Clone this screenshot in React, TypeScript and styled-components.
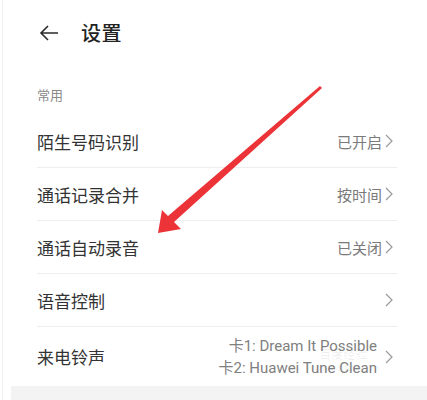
import * as React from 'react'
import styled, { createGlobalStyle } from 'styled-components'

const GlobalStyle = createGlobalStyle`
  html, body {
    margin: 0;
    padding: 0;
    background: #fff;
  }
  body {
    font-family: "Noto Sans CJK SC", "Noto Sans", Roboto, sans-serif;
  }
`

const Screen = styled.div`
  position: relative;
  width: 427px;
  height: 400px;
  overflow: hidden;
  background: #fff;
  border-left: 1px solid #f0f0f0;
  margin-left: 2px;
  box-sizing: border-box;
  display: flex;
  flex-direction: column;
`

const Header = styled.header`
  height: 65px;
  display: flex;
  align-items: center;
  padding-left: 36px;
  gap: 22px;
`

const BackButton = styled.button`
  border: 0;
  background: none;
  padding: 0;
  width: 20px;
  height: 18px;
  display: flex;
  align-items: center;
  color: #2a2a2a;
`

const Title = styled.h1`
  margin: 0;
  font-size: 20px;
  font-weight: 500;
  color: #222;
  letter-spacing: 0.5px;
`

const SectionLabel = styled.div`
  padding: 22px 0 12px 34px;
  font-size: 13px;
  line-height: 16px;
  color: #8a8a8a;
`

const List = styled.ul`
  list-style: none;
  margin: 0 32px 0 34px;
  padding: 0;
`

const Row = styled.li<{ $tall?: boolean }>`
  display: flex;
  align-items: center;
  justify-content: space-between;
  height: ${p => (p.$tall ? 59 : 52)}px;
  border-bottom: ${p => (p.$tall ? 'none' : '1px solid #eeeeee')};
  padding-right: 4px;
`

const Label = styled.span`
  font-size: 17px;
  color: #333;
`

const Value = styled.span`
  display: flex;
  align-items: center;
  font-size: 15px;
  color: #7a7a7a;
`

const ValueLines = styled.span`
  display: flex;
  flex-direction: column;
  align-items: flex-end;
  margin-right: 5px;
  line-height: 22px;
  font-family: Roboto, "Noto Sans CJK SC", sans-serif;
  color: #808080;
`

const Chevron = styled.svg`
  margin-left: 3px;
  flex-shrink: 0;
`

const BottomBand = styled.div`
  margin: auto 0 0 8px;
  height: 14px;
  background: #f3f3f3;
`

const Watermark = styled.div`
  position: absolute;
  left: 304px;
  top: 346px;
  display: flex;
  flex-direction: column;
  align-items: center;
  color: rgba(0, 0, 0, 0.08);
  font-size: 12px;
  line-height: 15px;
  pointer-events: none;
`

const WatermarkSmall = styled.span`
  font-size: 9px;
  font-family: "Liberation Sans", sans-serif;
`

const ArrowLayer = styled.svg`
  position: absolute;
  left: -2px;
  top: 0;
  pointer-events: none;
`

const ChevronIcon = () => (
  <Chevron width="8" height="14" viewBox="0 0 8 14">
    <path d="M1 1 L7 7 L1 13" fill="none" stroke="#9a9a9a" strokeWidth="1.2" />
  </Chevron>
)

const rows = [
  { label: '陌生号码识别', value: '已开启' },
  { label: '通话记录合并', value: '按时间' },
  { label: '通话自动录音', value: '已关闭' },
  { label: '语音控制', value: '' },
]

export default function App() {
  return (
    <>
      <GlobalStyle />
      <Screen>
        <Header>
          <BackButton aria-label="back">
            <svg width="20" height="16" viewBox="0 0 20 16">
              <path d="M9 1 L2 8 L9 15 M2 8 H19" fill="none" stroke="#2a2a2a" strokeWidth="1.6" />
            </svg>
          </BackButton>
          <Title>设置</Title>
        </Header>
        <SectionLabel>常用</SectionLabel>
        <List>
          {rows.map(r => (
            <Row key={r.label}>
              <Label>{r.label}</Label>
              <Value>
                {r.value}
                <ChevronIcon />
              </Value>
            </Row>
          ))}
          <Row $tall>
            <Label>来电铃声</Label>
            <Value>
              <ValueLines>
                <span>卡1: Dream It Possible</span>
                <span>卡2: Huawei Tune Clean</span>
              </ValueLines>
              <ChevronIcon />
            </Value>
          </Row>
        </List>
        <BottomBand />
        <Watermark>
          <span>百度经验</span>
          <WatermarkSmall>jingyan.baidu.com</WatermarkSmall>
        </Watermark>
        <ArrowLayer width="427" height="400" viewBox="0 0 427 400">
          <polygon
            points="157,233 161,210 167,216 319,86 321,88 173,222 180,229"
            fill="#ec3338"
          />
        </ArrowLayer>
      </Screen>
    </>
  )
}
